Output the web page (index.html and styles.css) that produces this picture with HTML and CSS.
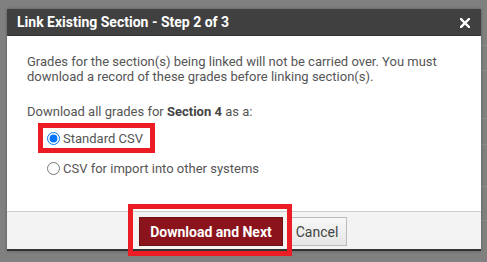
FILE: index.html
```html
<!DOCTYPE html>
<html lang="en">
<head>
    <meta charset="UTF-8">
    <title>Link Existing Section</title>
    <link rel="stylesheet" href="styles.css">
</head>
<body>
<!--dialog-->
<div class="dialog">
    <div class="dialog-head">
        <span class="dialog-title">Link Existing Section - Step 2 of 3</span>
        <button class="close-btn" aria-label="Close">
            <svg width="10" height="10" viewBox="0 0 10 10">
                <path d="M1 1L9 9M9 1L1 9" stroke="#fff" stroke-width="2.4" stroke-linecap="square"/>
            </svg>
        </button>
    </div>
    <div class="dialog-body">
        <p class="notice">Grades for the section(s) being linked will not be carried over. You must download a record of these grades before linking section(s).</p>
        <p class="prompt">Download all grades for <b>Section 4</b> as a:</p>
        <div class="options">
            <label class="option marked"><input type="radio" name="fmt" checked>Standard CSV</label>
            <label class="option"><input type="radio" name="fmt">CSV for import into other systems</label>
        </div>
    </div>
    <div class="dialog-foot">
        <button class="btn-primary">Download and Next</button>
        <button class="btn-cancel">Cancel</button>
    </div>
</div>
</body>
</html>
```

FILE: styles.css
```css
body {
    margin: 0;
    padding: 9px 0 0 7px;
    height: 262px;
    box-sizing: border-box;
    overflow: hidden;
    background-color: #808080;
    background-image:
        linear-gradient(#8c8c8c, #8c8c8c),
        linear-gradient(#8c8c8c, #8c8c8c),
        linear-gradient(#8c8c8c, #8c8c8c),
        linear-gradient(#8c8c8c, #8c8c8c),
        linear-gradient(#8c8c8c, #8c8c8c),
        linear-gradient(#8c8c8c, #8c8c8c);
    background-size: 6px 1px;
    background-repeat: no-repeat;
    background-position: 481px 45px, 481px 70px, 481px 118px, 481px 144px, 481px 186px, 481px 220px;
    font-family: Roboto, "Liberation Sans", sans-serif;
}

.dialog {
    width: 474px;
    background: white;
    border-bottom: 2px solid #333;
    box-shadow: 0 0 3px rgba(0, 0, 0, 0.3);
}

.dialog-head {
    height: 26px;
    background-color: #404040;
    border-bottom: 1px solid #333;
    display: flex;
    align-items: center;
    justify-content: space-between;
    padding: 0 11px 0 10px;
}

.dialog-title {
    color: white;
    font-size: 14px;
    font-weight: bold;
}

.close-btn {
    background: none;
    border: none;
    padding: 0;
    display: flex;
    margin-top: 2px;
}

.dialog-body {
    height: 175px;
    box-sizing: border-box;
    padding: 18px 20px 0 20px;
    color: #555;
    font-size: 13px;
    line-height: 15px;
}

.notice {
    margin: 0;
}

.prompt {
    margin: 20px 0 0 0;
}

.prompt b {
    color: #444;
}

.options {
    padding-left: 16px;
    margin-top: 9px;
}

.option {
    display: flex;
    align-items: center;
    height: 20px;
    padding-left: 4px;
    width: 107px;
    box-sizing: border-box;
    white-space: nowrap;
}

.option + .option {
    margin-top: 10px;
}

.option input {
    margin: 0 3px 0 0;
    width: 13px;
    height: 13px;
}

.marked {
    outline: 5px solid #ec1c24;
}

.dialog-foot {
    height: 38px;
    box-sizing: border-box;
    background-color: #f3f3f3;
    border-top: 1px solid #ccc;
    display: flex;
    align-items: flex-start;
    padding: 5px 0 0 132px;
    gap: 4px;
}

.btn-primary {
    position: relative;
    width: 144px;
    height: 29px;
    background-color: #8b141c;
    border: 1px solid #6e0f15;
    color: white;
    font-family: Roboto, "Liberation Sans", sans-serif;
    font-size: 14px;
    font-weight: bold;
}

.btn-primary::after {
    content: "";
    position: absolute;
    top: -14px;
    bottom: -11px;
    left: -12px;
    right: -10px;
    border: 5px solid #ec1c24;
}

.btn-cancel {
    width: 60px;
    height: 29px;
    background: linear-gradient(#f7f7f7, #e6e6e6);
    border: 1px solid #bbb;
    color: #444;
    font-family: Roboto, "Liberation Sans", sans-serif;
    font-size: 14px;
}
```
